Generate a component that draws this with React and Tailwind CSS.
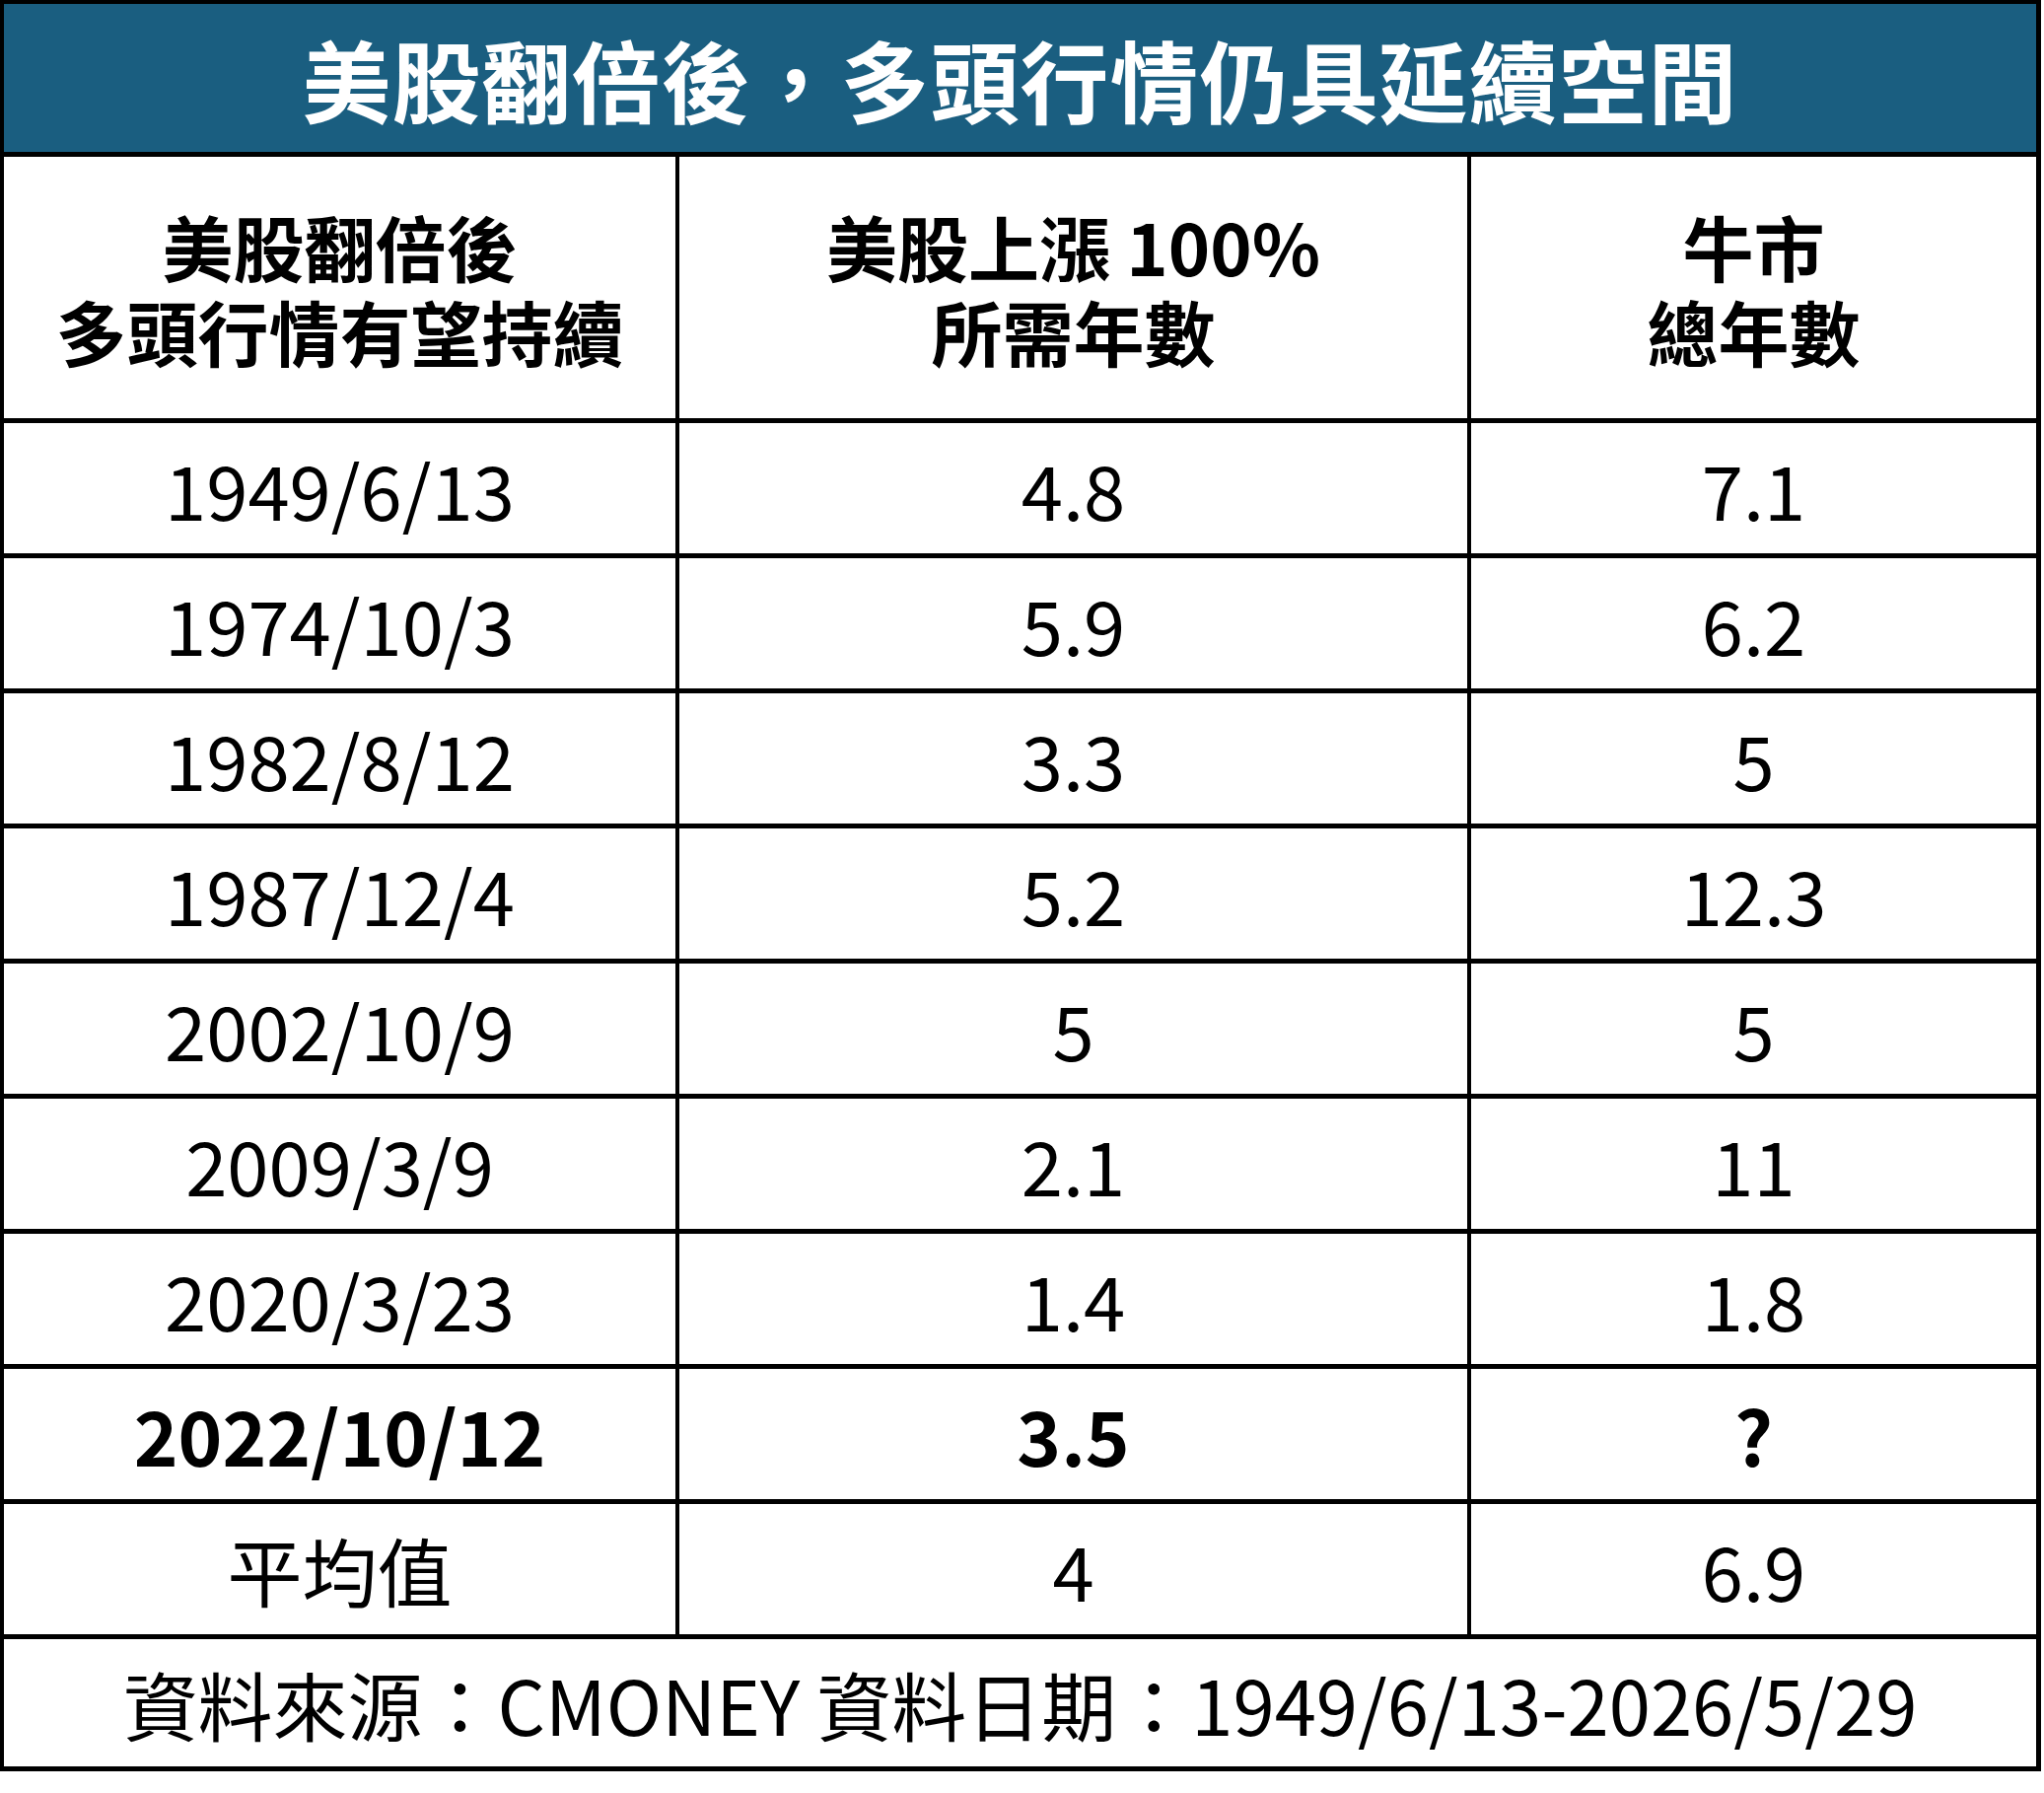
import React from 'react';

const rows = [
  { date: '1949/6/13', years: '4.8', total: '7.1' },
  { date: '1974/10/3', years: '5.9', total: '6.2' },
  { date: '1982/8/12', years: '3.3', total: '5' },
  { date: '1987/12/4', years: '5.2', total: '12.3' },
  { date: '2002/10/9', years: '5', total: '5' },
  { date: '2009/3/9', years: '2.1', total: '11' },
  { date: '2020/3/23', years: '1.4', total: '1.8' },
  { date: '2022/10/12', years: '3.5', total: '?', bold: true },
  { date: '平均值', years: '4', total: '6.9' },
];

const headers = [
  ['美股翻倍後', '多頭行情有望持續'],
  ['美股上漲 100%', '所需年數'],
  ['牛市', '總年數'],
];

const Cell = ({ children, className = '' }) => (
  <div className={`bg-white flex items-center justify-center text-center ${className}`}>
    {children}
  </div>
);

const App = () => {
  return (
    <div className="w-[2073px] h-[1818px] bg-white font-['Noto_Sans_CJK_TC','Noto_Sans',sans-serif] text-black">
      <div className="w-[2070px] bg-black pt-[4px] pl-[4px] pr-[5px] pb-[5px] flex flex-col gap-y-[5px]">
        {/* Title */}
        <div className="h-[150px] bg-[#1a5e80] flex items-center justify-center">
          <h1 className="text-white font-bold text-[90px] leading-none tracking-[1px]">
            美股翻倍後，多頭行情仍具延續空間
          </h1>
        </div>

        {/* Header */}
        <div className="grid grid-cols-[681px_799px_573px] gap-x-[4px] h-[265px]">
          {headers.map(([a, b]) => (
            <Cell key={a} className="flex-col gap-y-[10px] font-bold text-[72px] leading-[76px]">
              <div>{a}</div>
              <div>{b}</div>
            </Cell>
          ))}
        </div>

        {/* Data rows */}
        {rows.map((r) => (
          <div
            key={r.date}
            className={`grid grid-cols-[681px_799px_573px] gap-x-[4px] h-[132px] text-[76px] leading-none ${
              r.bold ? 'font-bold' : 'font-normal'
            }`}
          >
            <Cell>{r.date}</Cell>
            <Cell>{r.years}</Cell>
            <Cell>{r.total}</Cell>
          </div>
        ))}

        {/* Source */}
        <div className="h-[129px] bg-white flex items-center justify-center text-[76px] leading-none">
          資料來源：CMONEY 資料日期：1949/6/13-2026/5/29
        </div>
      </div>
    </div>
  );
};

export default App;
